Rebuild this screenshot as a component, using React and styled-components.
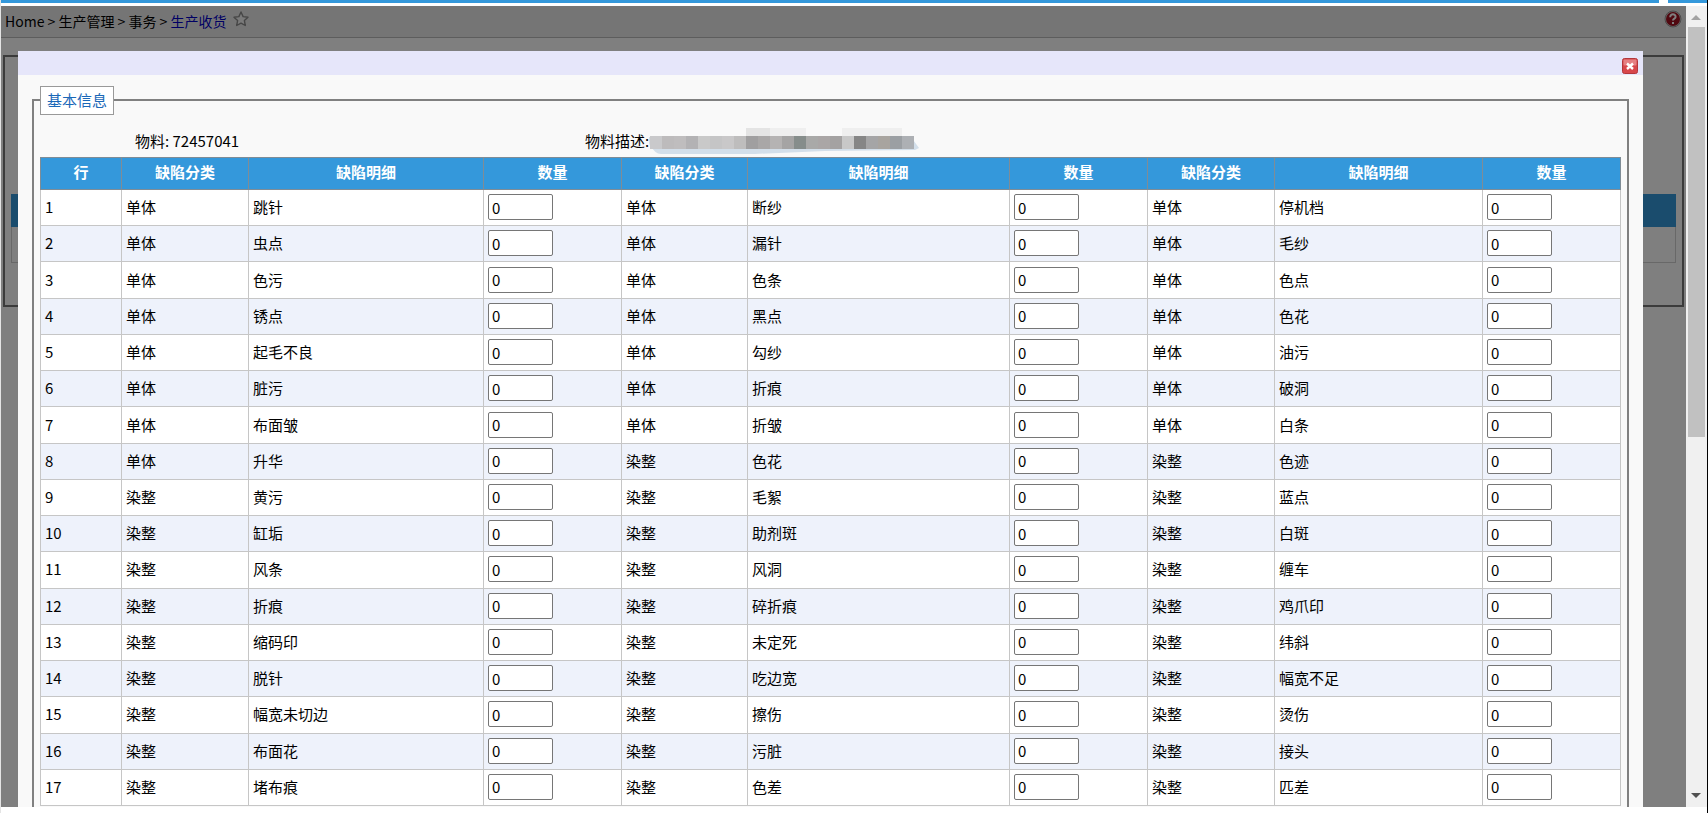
import React from "react";
import styled, {createGlobalStyle} from "styled-components";

const colors = {
   blue: "#3498db",
   lavender: "#e6e6fa",
   panel: "#f9f9f9",
   stripe: "#eef2fb",
   line: "#c6c6c6",
   border: "#808080",
   legend: "#1a68b8",
}

// widths are relative shares of the table
const columns = [
   {title: "行", width: 81},
   {title: "缺陷分类", width: 127},
   {title: "缺陷明细", width: 235},
   {title: "数量", width: 138},
   {title: "缺陷分类", width: 126},
   {title: "缺陷明细", width: 262},
   {title: "数量", width: 138},
   {title: "缺陷分类", width: 127},
   {title: "缺陷明细", width: 208},
   {title: "数量", width: 138},
]

const totalWidth = columns.reduce((sum, {width}) => sum + width, 0)

const rows = [
   [["单体", "跳针"], ["单体", "断纱"], ["单体", "停机档"]],
   [["单体", "虫点"], ["单体", "漏针"], ["单体", "毛纱"]],
   [["单体", "色污"], ["单体", "色条"], ["单体", "色点"]],
   [["单体", "锈点"], ["单体", "黑点"], ["单体", "色花"]],
   [["单体", "起毛不良"], ["单体", "勾纱"], ["单体", "油污"]],
   [["单体", "脏污"], ["单体", "折痕"], ["单体", "破洞"]],
   [["单体", "布面皱"], ["单体", "折皱"], ["单体", "白条"]],
   [["单体", "升华"], ["染整", "色花"], ["染整", "色迹"]],
   [["染整", "黄污"], ["染整", "毛絮"], ["染整", "蓝点"]],
   [["染整", "缸垢"], ["染整", "助剂斑"], ["染整", "白斑"]],
   [["染整", "风条"], ["染整", "风洞"], ["染整", "缠车"]],
   [["染整", "折痕"], ["染整", "碎折痕"], ["染整", "鸡爪印"]],
   [["染整", "缩码印"], ["染整", "未定死"], ["染整", "纬斜"]],
   [["染整", "脱针"], ["染整", "吃边宽"], ["染整", "幅宽不足"]],
   [["染整", "幅宽未切边"], ["染整", "擦伤"], ["染整", "烫伤"]],
   [["染整", "布面花"], ["染整", "污脏"], ["染整", "接头"]],
   [["染整", "堵布痕"], ["染整", "色差"], ["染整", "匹差"]],
]

const maskTiles = [
   "#c9c9cb", "#bdbbbc", "#bfbdbe", "#b3b2b4", "#c9c9c9", "#c5c5c6", "#c9c8c9", "#bebdbd",
   "#a09fa0", "#a9a7a7", "#b5b3b3", "#a5a4a4", "#868d8b", "#a9a9a8", "#aaa6a6", "#a4a2a2",
   "#c8c8c8", "#868686", "#a5a5a6", "#a8a49f", "#9b9fa3", "#adb0b4",
]


export default function App() {
   return (
      <>
         <GlobalStyle/>
         <Shell>
            <TabStrip>
               <span/>
               <span/>
            </TabStrip>
            <Frame>
               <Page>
                  <Breadcrumb/>
                  <PageFieldset>
                     <PageTableHead/>
                     <PageTableRow/>
                  </PageFieldset>
                  <Backdrop>
                     <DefectDialog/>
                  </Backdrop>
               </Page>
               <Scrollbar/>
            </Frame>
         </Shell>
      </>
   )
}

function Breadcrumb() {
   return (
      <StyledBreadcrumb>
         <nav>
            Home &gt; 生产管理 &gt; 事务 &gt; <a href="#receipt">生产收货</a>
         </nav>
         <button type="button" aria-label="收藏" className="favourite">
            <svg width="16" height="16" viewBox="0 0 16 16">
               <path
                  d="M8 1l2.1 4.6 4.9.6-3.6 3.4.9 4.9L8 12.100l-4.300 2.400.9-4.900L1 6.200l4.900-.6z"
                  fill="#f4f4f4" stroke="#8c8c8c" strokeWidth="1.4" strokeLinejoin="round"/>
            </svg>
         </button>
         <button type="button" aria-label="帮助" className="help">
            <svg width="18" height="18" viewBox="0 0 18 18">
               <circle cx="9" cy="9" r="8" fill="#d8d0d0" stroke="#999" strokeWidth="1"/>
               <circle cx="9" cy="9" r="7" fill="#a01020"/>
               <path d="M6.2 7.2c0-4 5.6-3.6 5.4-.2-.1 1.7-2.6 1.5-2.6 3.500M9 12v2"
                     fill="none" stroke="#fff" strokeWidth="2"/>
            </svg>
         </button>
      </StyledBreadcrumb>
   )
}

function DefectDialog() {
   return (
      <Dialog role="dialog" aria-label="基本信息">
         <DialogHeader>
            <CloseButton type="button" aria-label="关闭">
               <svg width="16" height="16" viewBox="0 0 16 16">
                  <rect x="0.5" y="0.5" width="15" height="15" rx="2" fill="#d8474b" stroke="#b3373c"/>
                  <rect x="1.5" y="1.5" width="13" height="6" rx="1" fill="#e58083"/>
                  <path d="M5 5.500l6 5.500M11 5.500l-6 5.500" stroke="#fff" strokeWidth="2.400"/>
               </svg>
            </CloseButton>
         </DialogHeader>
         <Fieldset>
            <Legend>基本信息</Legend>
            <Material>
               <span>物料: 72457041</span>
               <span>物料描述:<MaskedText/></span>
            </Material>
            <DefectTable/>
         </Fieldset>
      </Dialog>
   )
}

function MaskedText() {
   return (
      <svg width="270" height="28" viewBox="0 0 270 28" aria-hidden="true">
         <path d="M0 10h262l8 11-4 2-90 1-70 3H12q-6 0-12-10z" fill="#d3dfea"/>
         <rect x="97" y="1" width="24" height="9" fill="#e4e4e4"/>
         <rect x="121" y="1" width="36" height="9" fill="#efefef"/>
         <rect x="193" y="1" width="60" height="9" fill="#efefef"/>
         {maskTiles.map((color, i) => (
            <rect key={i} x={1 + i * 12} y="9" width="12" height="13" fill={color}/>
         ))}
      </svg>
   )
}

function DefectTable() {
   return (
      <TableWrapper>
         <Table>
            <colgroup>
               {columns.map(({width}, i) => <Col key={i} $share={width / totalWidth}/>)}
            </colgroup>
            <thead>
               <tr>
                  {columns.map(({title}, i) => <th key={i} scope="col">{title}</th>)}
               </tr>
            </thead>
            <tbody>
               {rows.map((groups, i) => (
                  <tr key={i}>
                     <td>{i + 1}</td>
                     {groups.map(([category, detail], j) => (
                        <React.Fragment key={j}>
                           <td>{category}</td>
                           <td>{detail}</td>
                           <td>
                              <QuantityInput aria-label={`${category} ${detail} 数量`} defaultValue="0"/>
                           </td>
                        </React.Fragment>
                     ))}
                  </tr>
               ))}
            </tbody>
         </Table>
      </TableWrapper>
   )
}

function Scrollbar() {
   return (
      <StyledScrollbar>
         <svg width="20" height="21" viewBox="0 0 20 21">
            <path d="M5 14l5-5 5 5z" fill="#a3a3a3"/>
         </svg>
         <div className="track">
            <div className="thumb"/>
         </div>
         <svg width="20" height="21" viewBox="0 0 20 21">
            <path d="M5 7l5 5 5-5z" fill="#505050"/>
         </svg>
      </StyledScrollbar>
   )
}

const GlobalStyle = createGlobalStyle`
  * {
    box-sizing: border-box;
  }

  body {
    margin: 0;
    background: #fff;
    color: #000;
    font-family: "Noto Sans CJK SC", sans-serif;
    font-size: 15px;
    line-height: 20px;
  }

  button {
    display: flex;
    padding: 0;
    border: 0;
    background: none;
    cursor: pointer;
  }
`

const Shell = styled.div`
  display: flex;
  flex-direction: column;
  height: 100vh;
  padding-bottom: 6px;
  border-left: 1px solid #e4e4e4;
  border-right: 1px solid #000;
  overflow: hidden;
`

const TabStrip = styled.div`
  display: flex;
  gap: 9px;
  height: 6px;
  padding-bottom: 3px;

  span {
    width: 39px;
    background: ${colors.blue};
  }

  span:first-child {
    flex: 1;
  }
`

const Frame = styled.div`
  display: flex;
  flex: 1;
  min-height: 0;
`

const Page = styled.main`
  position: relative;
  flex: 1;
  overflow: hidden;
`

const StyledBreadcrumb = styled.header`
  display: flex;
  align-items: center;
  gap: 6px;
  height: 32px;
  padding: 0 4px 2px;
  border-bottom: 1px solid #bbb;
  background: #ebebeb;
  font-size: 14px;

  a {
    color: #0000c8;
    text-decoration: none;
  }

  .favourite {
    margin-bottom: 4px;
  }

  .help {
    margin: 0 0 4px auto;
  }
`

const PageFieldset = styled.section`
  height: 252px;
  margin: 17px 2px 0;
  padding: 137px 6px 0;
  border: 2px solid #777;
`

const PageTableHead = styled.div`
  height: 33px;
  background: ${colors.blue};
`

const PageTableRow = styled.div`
  height: 36px;
  border: 1px solid #d0d0d0;
  border-top: 0;
`

const Backdrop = styled.div`
  position: absolute;
  inset: 0;
  display: flex;
  padding: 45px 43px 0 17px;
  background: rgba(0, 0, 0, 0.5);
`

const Dialog = styled.div`
  display: flex;
  flex: 1;
  flex-direction: column;
  min-width: 0;
  background: ${colors.panel};
`

const DialogHeader = styled.div`
  display: flex;
  align-items: flex-end;
  justify-content: flex-end;
  height: 24px;
  padding: 0 5px 1px;
  background: ${colors.lavender};
`

const CloseButton = styled.button`
  border-radius: 2px;
`

const Fieldset = styled.section`
  display: flex;
  flex: 1;
  flex-direction: column;
  margin: 24px 14px 0;
  padding: 0 6px;
  border: 2px solid ${colors.border};
  border-bottom: 0;
`

const Legend = styled.h2`
  align-self: flex-start;
  margin: -15px 0 0;
  padding: 3px 6px 4px;
  border: 1px solid #999;
  background: #fff;
  color: ${colors.legend};
  font-size: 15px;
  font-weight: 400;
`

const Material = styled.div`
  display: grid;
  grid-template-columns: 450px 1fr;
  align-items: center;
  height: 28px;
  margin: 12px 0 2px;
  padding-left: 95px;

  span {
    display: flex;
    align-items: center;
  }
`

const TableWrapper = styled.div`
  flex: 1;
  padding-bottom: 1px;
`

const Table = styled.table`
  width: 100%;
  height: 100%;
  border-collapse: collapse;
  table-layout: fixed;

  th, td {
    padding: 0 4px;
    border: 1px solid ${colors.line};
    text-align: left;
  }

  td {
    padding-bottom: 1px;
    background: #fff;
  }

  tbody tr:nth-child(even) td {
    background: ${colors.stripe};
  }

  th {
    height: 32px;
    padding-bottom: 3px;
    border-color: #7f8c96;
    background: ${colors.blue};
    color: #fff;
    font-weight: 700;
    text-align: center;
  }
`

const Col = styled.col`
  width: ${({$share}) => $share * 100}%;
`

const QuantityInput = styled.input`
  display: block;
  width: 65px;
  height: 26px;
  padding: 0 3px;
  border: 1px solid #767676;
  border-radius: 2px;
  background: #fff;
  font: inherit;
`

const StyledScrollbar = styled.aside`
  display: flex;
  flex-direction: column;
  width: 21px;
  background: #f0f0f0;

  .track {
    flex: 1;
    padding: 0 2px;
  }

  .thumb {
    height: 54%;
    background: #c1c1c1;
  }
`
